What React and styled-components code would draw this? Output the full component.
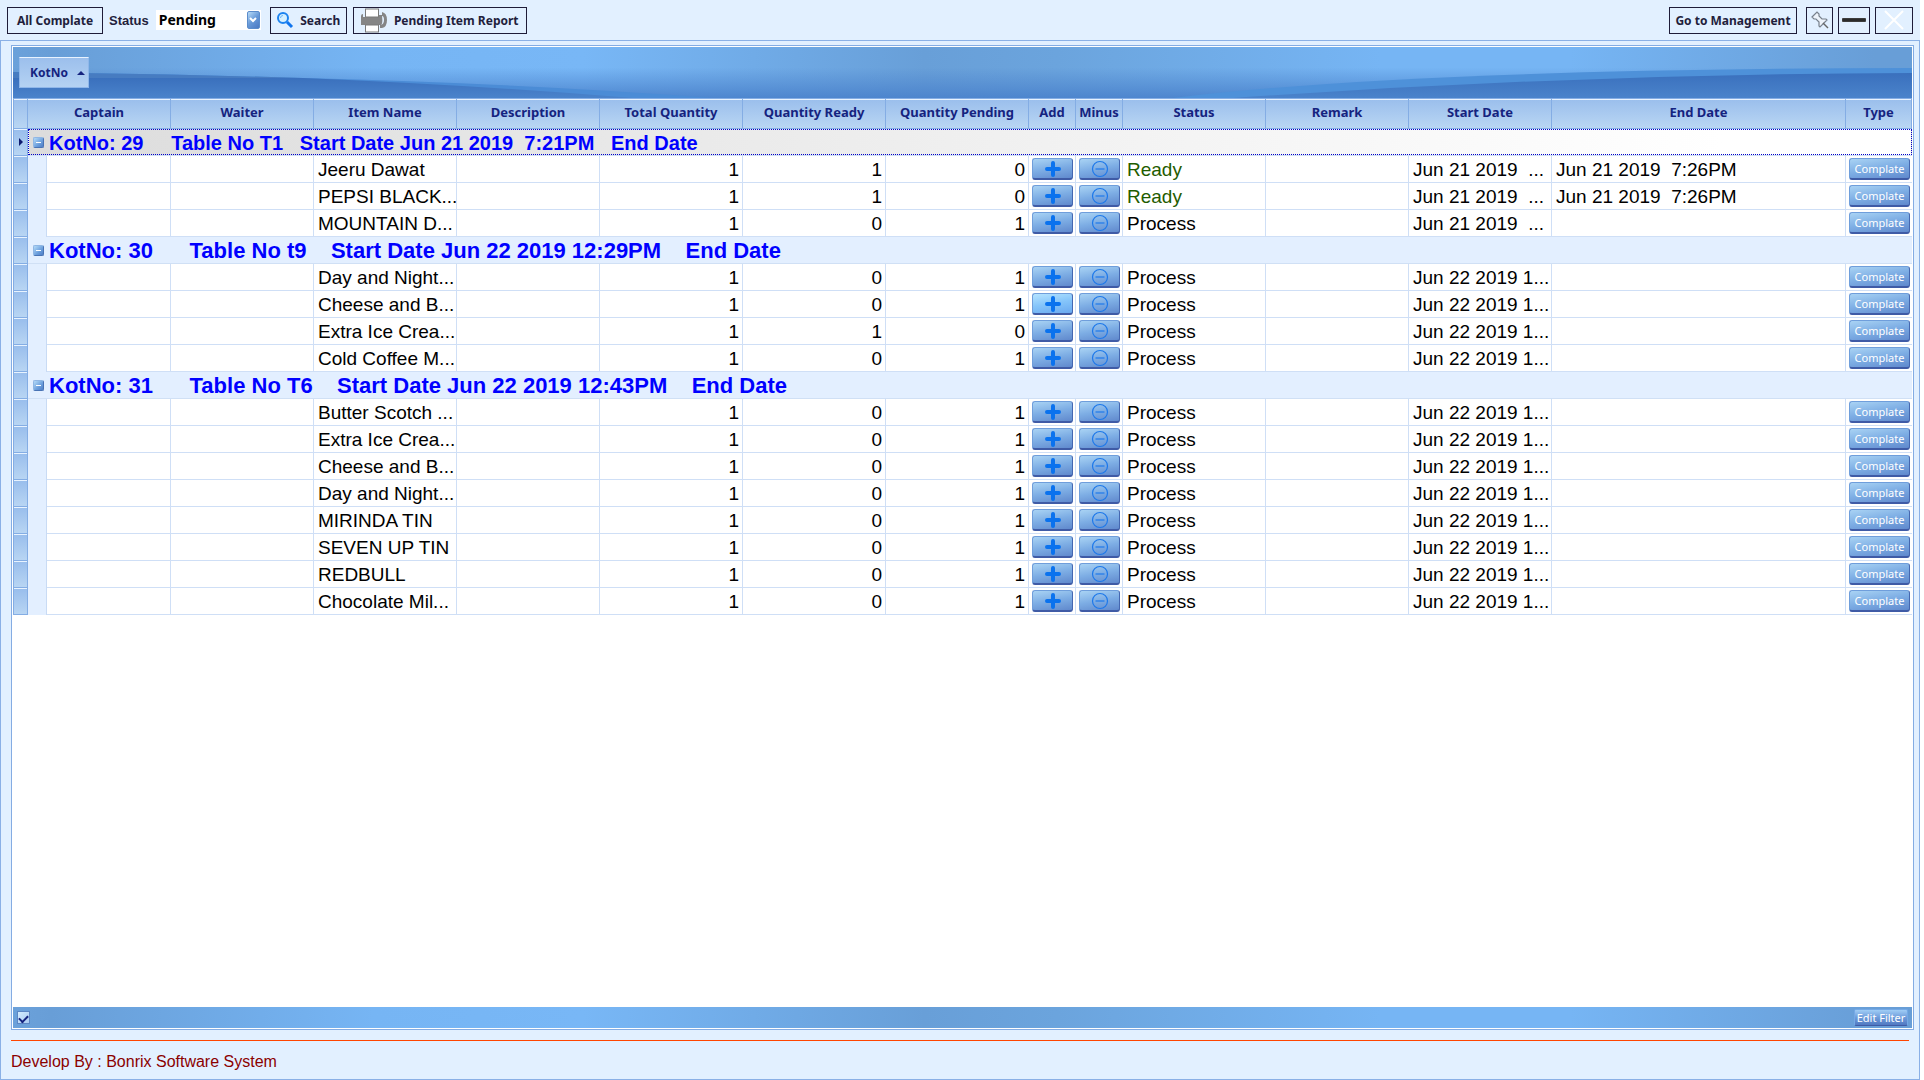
import React from 'react'
import styled, { createGlobalStyle } from 'styled-components'

const columns = [
    { label: 'Captain', key: 'captain' },
    { label: 'Waiter', key: 'waiter' },
    { label: 'Item Name', key: 'item' },
    { label: 'Description', key: 'description' },
    { label: 'Total Quantity', key: 'total', align: 'right' },
    { label: 'Quantity Ready', key: 'ready', align: 'right' },
    { label: 'Quantity Pending', key: 'pending', align: 'right' },
    { label: 'Add', key: 'add' },
    { label: 'Minus', key: 'minus' },
    { label: 'Status', key: 'status' },
    { label: 'Remark', key: 'remark' },
    { label: 'Start Date', key: 'start' },
    { label: 'End Date', key: 'end' },
    { label: 'Type', key: 'type' },
]

const row = (item, ready, pending, status, start, end) => ({ item, total: 1, ready, pending, status, start, end })

const groups = [
    {
        title: 'KotNo: 29     Table No T1   Start Date Jun 21 2019  7:21PM   End Date',
        focused: true,
        rows: [
            row('Jeeru Dawat', 1, 0, 'Ready', 'Jun 21 2019  ...', 'Jun 21 2019  7:26PM'),
            row('PEPSI BLACK...', 1, 0, 'Ready', 'Jun 21 2019  ...', 'Jun 21 2019  7:26PM'),
            row('MOUNTAIN D...', 0, 1, 'Process', 'Jun 21 2019  ...'),
        ],
    },
    {
        title: 'KotNo: 30      Table No t9    Start Date Jun 22 2019 12:29PM    End Date',
        rows: [
            row('Day and Night...', 0, 1, 'Process', 'Jun 22 2019 1...'),
            { ...row('Cheese and B...', 0, 1, 'Process', 'Jun 22 2019 1...'), hot: true },
            row('Extra Ice Crea...', 1, 0, 'Process', 'Jun 22 2019 1...'),
            row('Cold Coffee M...', 0, 1, 'Process', 'Jun 22 2019 1...'),
        ],
    },
    {
        title: 'KotNo: 31      Table No T6    Start Date Jun 22 2019 12:43PM    End Date',
        rows: [
            row('Butter Scotch ...', 0, 1, 'Process', 'Jun 22 2019 1...'),
            row('Extra Ice Crea...', 0, 1, 'Process', 'Jun 22 2019 1...'),
            row('Cheese and B...', 0, 1, 'Process', 'Jun 22 2019 1...'),
            row('Day and Night...', 0, 1, 'Process', 'Jun 22 2019 1...'),
            row('MIRINDA TIN', 0, 1, 'Process', 'Jun 22 2019 1...'),
            row('SEVEN UP TIN', 0, 1, 'Process', 'Jun 22 2019 1...'),
            row('REDBULL', 0, 1, 'Process', 'Jun 22 2019 1...'),
            row('Chocolate Mil...', 0, 1, 'Process', 'Jun 22 2019 1...'),
        ],
    },
]

const SearchIcon = () => (
    <svg width="18" height="18" viewBox="0 0 18 18" aria-hidden="true">
        <circle cx="7" cy="7" r="5" fill="#d5efff" stroke="#1c83f0" strokeWidth="2" />
        <path d="M4.5 7a2.5 2.5 0 0 1 2.5-2.5" fill="none" stroke="#6ab5f7" />
        <path d="M11 11l5 5" stroke="#0f74ee" strokeWidth="3" />
    </svg>
)

const PrinterIcon = () => (
    <svg width="27" height="25" viewBox="0 0 27 25" aria-hidden="true">
        <path d="M0 8q0-2 2-2v3h16V7h3V4q5 1 5 8t-5 8h-2v-3h1q3-1 3-5t-2-4q1 8-1 9H0z" fill="#858585" />
        <rect x="4.500" y="1" width="13" height="8" fill="#fff" stroke="#7a7a7a" />
        <rect x="4.500" y="17" width="13" height="7" fill="#fff" stroke="#7a7a7a" />
    </svg>
)

const PinIcon = () => (
    <svg width="18" height="18" viewBox="0 0 18 18" aria-hidden="true">
        <path d="M1 6l5-5 2 2v2l3 3h4l1 1-7 7-1-1v-4L5 8H3z" fill="#edf3fa" stroke="#77808c" strokeWidth="1.2" />
        <path d="M12 12l5 5" stroke="#666" strokeWidth="1.4" />
    </svg>
)

const MinimizeIcon = () => (
    <svg width="24" height="4" viewBox="0 0 24 4" aria-hidden="true">
        <rect width="24" height="4" rx="1" fill="#2b2b2b" stroke="#777" strokeWidth=".5" />
    </svg>
)

const CloseIcon = () => (
    <svg width="20" height="20" viewBox="0 0 20 20" aria-hidden="true">
        <path d="M1 1l18 18M19 1L1 19" stroke="#fff" strokeWidth="2" />
    </svg>
)

const PlusIcon = () => (
    <svg width="16" height="16" viewBox="0 0 16 16" aria-hidden="true">
        <path d="M8 2v12M2 8h12" stroke="#0a72ee" strokeWidth="4" strokeLinecap="round" />
    </svg>
)

const CircleMinusIcon = () => (
    <svg width="18" height="18" viewBox="0 0 18 18" aria-hidden="true">
        <circle cx="9" cy="9" r="7.5" fill="none" stroke="#1d78ea" strokeWidth="1.2" />
        <path d="M4.500 9h9" stroke="#2b80ea" strokeWidth="1.4" />
    </svg>
)

const BandWaves = () => (
    <svg width="100%" height="51" viewBox="0 0 1899 51" preserveAspectRatio="none" aria-hidden="true">
        <defs>
            <linearGradient id="shade" x1="0" y1="0" x2="0" y2="1">
                <stop offset="0" stopColor="#4a82cc" stopOpacity="0" />
                <stop offset=".4" stopColor="#4a82cc" stopOpacity="0" />
                <stop offset="1" stopColor="#4a82cc" stopOpacity=".9" />
            </linearGradient>
            <linearGradient id="deep" x1="0" y1="0" x2="0" y2="1">
                <stop offset="0" stopColor="#3a70bd" />
                <stop offset="1" stopColor="#4a83cb" />
            </linearGradient>
        </defs>
        <rect width="1899" height="51" fill="url(#shade)" />
        <path d="M0 25Q160 27 290 31Q520 37 700 51H0z" fill="#4b8cd6" />
        <path d="M0 25Q160 27 290 31L0 36z" fill="#477cc1" />
        <path d="M0 31H290Q460 38 620 51H0z" fill="url(#deep)" />
        <path d="M1160 51Q1400 22 1899 21V51z" fill="#4e91d9" />
        <path d="M1220 51Q1560 27 1899 26V51z" fill="url(#deep)" />
    </svg>
)

const App = () => {
    return <Window>
        <GlobalStyle />
        <Toolbar>
            <ToolButton>All Complate</ToolButton>
            <StatusField>
                <StatusLabel htmlFor="status">Status</StatusLabel>
                <SelectBox>
                    <StatusSelect id="status" defaultValue="Pending">
                        <option>Pending</option>
                        <option>Ready</option>
                    </StatusSelect>
                    <SelectArrow>
                        <svg width="8" height="6" viewBox="0 0 8 6" aria-hidden="true">
                            <path d="M1 1l3 3 3-3" fill="none" stroke="#fff" strokeWidth="2" />
                        </svg>
                    </SelectArrow>
                </SelectBox>
            </StatusField>
            <ToolButton $width={77}><SearchIcon />Search</ToolButton>
            <ToolButton $width={174}><PrinterIcon />Pending Item Report</ToolButton>
            <WindowButtons>
                <ToolButton $width={128}>Go to Management</ToolButton>
                <WindowControls>
                    <ToolButton $width={27} aria-label="Pin"><PinIcon /></ToolButton>
                    <ToolButton $width={32} aria-label="Minimize"><MinimizeIcon /></ToolButton>
                    <ToolButton $width={38} aria-label="Close"><CloseIcon /></ToolButton>
                </WindowControls>
            </WindowButtons>
        </Toolbar>
        <Panel>
            <Grid>
                <GroupBand>
                    <BandWaves />
                    <GroupChip>KotNo<SortArrow /></GroupChip>
                </GroupBand>
                <TableArea>
                    <KotTable>
                        <colgroup>
                            <col style={{ width: 15 }} />
                            <col style={{ width: 19 }} />
                            <col style={{ width: 124 }} />
                            {[143, 143, 143, 143, 143, 143, 47, 47, 143, 143, 143].map((width, i) => (
                                <col key={i} style={{ width }} />
                            ))}
                            <col />
                            <col style={{ width: 66 }} />
                        </colgroup>
                        <thead>
                            <tr>
                                <HeadCell $first />
                                {columns.map((column, i) => (
                                    <HeadCell key={column.key} colSpan={i === 0 ? 2 : 1}>{column.label}</HeadCell>
                                ))}
                            </tr>
                        </thead>
                        <tbody>
                            {groups.map((group) => (
                                <React.Fragment key={group.title}>
                                    <tr>
                                        <MarkerCell>{group.focused && <RowArrow />}</MarkerCell>
                                        <GroupCell colSpan={15}>
                                            <GroupTitle $focused={group.focused}>
                                                <Toggle aria-label="Collapse group" />
                                                <GroupText>{group.title}</GroupText>
                                            </GroupTitle>
                                        </GroupCell>
                                    </tr>
                                    {group.rows.map((item, i) => (
                                        <tr key={i}>
                                            <MarkerCell />
                                            <IndentCell />
                                            {columns.map((column) => <GridCell key={column.key} column={column} item={item} />)}
                                        </tr>
                                    ))}
                                </React.Fragment>
                            ))}
                        </tbody>
                    </KotTable>
                </TableArea>
                <FilterBar>
                    <FilterCheck type="checkbox" defaultChecked aria-label="Filter enabled" />
                    <EditFilter>Edit Filter</EditFilter>
                </FilterBar>
            </Grid>
            <Footer>Develop By : Bonrix Software System</Footer>
        </Panel>
    </Window>
}

const GridCell = ({ column, item }) => {
    if (column.key === 'add') {
        return <ButtonCell><GlossButton $hot={item.hot} aria-label="Add"><PlusIcon /></GlossButton></ButtonCell>
    }
    if (column.key === 'minus') {
        return <ButtonCell><GlossButton aria-label="Minus"><CircleMinusIcon /></GlossButton></ButtonCell>
    }
    if (column.key === 'type') {
        return <ButtonCell $last><GlossButton>Complate</GlossButton></ButtonCell>
    }
    const ready = column.key === 'status' && item.status === 'Ready'
    return <Cell $align={column.align} $ready={ready}>{item[column.key]}</Cell>
}

const GlobalStyle = createGlobalStyle`
* {
    box-sizing: border-box;
}
body {
    margin: 0;
    background: #fff;
    font-family: "Liberation Sans", Arial, sans-serif;
}
button {
    font-family: "Noto Sans", Tahoma, sans-serif;
}
`

const Window = styled.div`
    display: flex;
    flex-direction: column;
    min-height: 100vh;
    margin-right: 4px;
    background: #e2f0ff;
`

const Toolbar = styled.header`
    display: flex;
    align-items: center;
    gap: 6px;
    height: 40px;
    padding: 0 7px;
`

const ToolButton = styled.button`
    display: flex;
    align-items: center;
    justify-content: center;
    gap: 6px;
    width: ${({ $width }) => $width || 96}px;
    height: 27px;
    padding: 0;
    border: 1px solid #1f1c38;
    background: transparent;
    color: #221e3c;
    font-size: 12px;
    font-weight: 700;
    white-space: nowrap;
`

const StatusField = styled.div`
    display: flex;
    align-items: center;
    gap: 7px;
    margin-right: 3px;
`

const StatusLabel = styled.label`
    color: #221e3c;
    font-size: 13px;
    font-weight: 700;
`

const SelectBox = styled.div`
    display: flex;
    align-items: center;
    width: 105px;
    height: 20px;
    padding-right: 1px;
    background: #fff;
`

const StatusSelect = styled.select`
    flex: 1;
    min-width: 0;
    height: 20px;
    padding: 0 0 0 3px;
    border: 0;
    background: transparent;
    color: #000;
    appearance: none;
    font-family: "Noto Sans", Tahoma, sans-serif;
    font-size: 14px;
    font-weight: 700;
    line-height: 20px;
`

const SelectArrow = styled.span`
    display: flex;
    align-items: center;
    justify-content: center;
    width: 13px;
    height: 18px;
    border: 1px solid #5b8ccb;
    border-radius: 2px;
    background: linear-gradient(135deg, #b8dbf7, #6799d8 50%, #4a78c2);
`

const WindowButtons = styled.div`
    display: flex;
    gap: 9px;
    margin-left: auto;
`

const WindowControls = styled.div`
    display: flex;
    gap: 5px;
`

const Panel = styled.main`
    display: flex;
    flex: 1;
    flex-direction: column;
    padding: 4px 5px 0 10px;
    border: 1px solid #8ab0e6;
`

const Grid = styled.section`
    display: flex;
    flex: 1;
    flex-direction: column;
    padding: 1px;
    border: 1px solid #84ace3;
    background: #fff;
`

const GroupBand = styled.div`
    position: relative;
    height: 51px;
    background: linear-gradient(90deg, #6ba1da, #689ed7 2%, #76b5f4 19%, #78b7f6 30%, #689fd8 48%, #6ba4dd 55%, #76b5f4 72%, #76b5f4 82%, #689ed7 98%);
    svg {
        display: block;
    }
`

const GroupChip = styled.button`
    position: absolute;
    top: 10px;
    left: 6px;
    display: flex;
    align-items: center;
    justify-content: space-between;
    width: 70px;
    height: 31px;
    padding: 0 3px 0 10px;
    border: 1px solid #8fb7ea;
    border-top: 1px solid #e8f3ff;
    background: linear-gradient(#9cbfec, #b4d2f3);
    color: #15237f;
    font-size: 12px;
    font-weight: 700;
`

const SortArrow = styled.span`
    border: 4px solid transparent;
    border-top-width: 0;
    border-bottom-color: #15237f;
`

const TableArea = styled.div`
    flex: 1;
`

const KotTable = styled.table`
    width: 100%;
    table-layout: fixed;
    border-collapse: separate;
    border-spacing: 0;
`

const HeadCell = styled.th`
    height: 31px;
    padding: 0 0 3px;
    border: solid #84ade4;
    border-width: 1px 1px 1px ${({ $first }) => $first ? 1 : 0}px;
    background: linear-gradient(#9abeec, #b9d6f3);
    box-shadow: inset 0 1px #e8f3ff;
    color: #15237f;
    font-family: "Noto Sans", Tahoma, sans-serif;
    font-size: 13px;
    font-weight: 700;
    line-height: 24px;
    white-space: nowrap;
`

const MarkerCell = styled.td`
    height: 27px;
    padding: 0 0 0 5px;
    border: solid #84ade4;
    border-width: 0 1px 1px 1px;
    background: linear-gradient(#98bdec, #b8d5f3);
    box-shadow: inset 0 1px #e8f3ff;
`

const RowArrow = styled.span`
    display: block;
    width: 4px;
    border: 4px solid transparent;
    border-right-width: 0;
    border-left-color: #0f1c70;
`

const GroupCell = styled.td`
    height: 27px;
    padding: 0;
    border-bottom: 1px solid #d0e0f5;
    background: #e3efff;
`

const GroupTitle = styled.div`
    display: flex;
    align-items: center;
    gap: 5px;
    height: 26px;
    padding-left: 4px;
    border: 1px ${({ $focused }) => $focused ? 'dotted #0000c8' : 'solid transparent'};
    background: ${({ $focused }) => $focused ? 'linear-gradient(90deg, #dcdcdc, #fff 90%)' : 'none'};
    color: #0000ff;
    font-size: ${({ $focused }) => $focused ? 20 : 22}px;
    font-weight: 700;
    line-height: 22px;
    white-space: pre;
`

const GroupText = styled.span`
    padding-top: 2px;
`

const Toggle = styled.button`
    display: flex;
    align-items: center;
    justify-content: center;
    width: 11px;
    height: 11px;
    padding: 0;
    border: 1px solid #4873b5;
    border-top-color: #8fb6e4;
    border-left-color: #8fb6e4;
    border-radius: 2px;
    background: linear-gradient(135deg, #b4dbf8, #6b9edc 60%, #4f7ec6);
    &::before {
        content: '';
        width: 5px;
        height: 1px;
        background: #fff;
    }
`

const IndentCell = styled.td`
    padding: 0;
    border-right: 1px solid #c9dbf4;
    background: #e3efff;
`

const Cell = styled.td`
    height: 27px;
    padding: 2px 3px 0 4px;
    overflow: hidden;
    border: solid #cfdff6;
    border-width: 0 1px 1px 0;
    color: ${({ $ready }) => $ready ? '#1f5c00' : '#000'};
    font-size: 19px;
    line-height: 24px;
    text-align: ${({ $align }) => $align || 'left'};
    white-space: pre;
`

const ButtonCell = styled.td`
    height: 27px;
    padding: 2px 2px 2px 3px;
    border: solid #cfdff6;
    border-width: 0 ${({ $last }) => $last ? 0 : 1}px 1px 0;
`

const GlossButton = styled.button`
    display: flex;
    align-items: center;
    justify-content: center;
    width: 100%;
    height: 22px;
    padding: 0;
    border: 1px solid #6f9edb;
    border-right-color: #4567b0;
    border-bottom: 2px solid #3f5ba6;
    border-radius: 3px;
    background: ${({ $hot }) => $hot
        ? 'linear-gradient(170deg, #b5e4ff, #84c4fa 50%, #6aa9f0)'
        : 'linear-gradient(170deg, #a9d3f4, #7dade4 50%, #6089cd)'};
    color: #fff;
    font-size: 11px;
`

const FilterBar = styled.div`
    display: flex;
    align-items: center;
    justify-content: space-between;
    height: 21px;
    padding: 0 4px;
    background: linear-gradient(90deg, #6ba1da, #689ed7 2%, #76b5f4 19%, #78b7f6 30%, #689fd8 48%, #6ba4dd 55%, #76b5f4 72%, #76b5f4 82%, #689ed7 98%);
`

const FilterCheck = styled.input`
    display: grid;
    place-items: center;
    width: 13px;
    height: 13px;
    margin: 0;
    appearance: none;
    border: 1px solid #5c86c4;
    background: linear-gradient(135deg, #d3ecff, #a9caf2);
    &:checked::before {
        content: '';
        width: 7px;
        height: 4px;
        border: solid #15237f;
        border-width: 0 0 2px 2px;
        transform: rotate(-45deg);
    }
`

const EditFilter = styled.button`
    width: 54px;
    height: 17px;
    padding: 0;
    border: 1px solid #74a9e6;
    border-bottom-color: #3f5ba6;
    border-radius: 2px;
    background: linear-gradient(#a0cdf5, #6f9cdb 50%, #5079c2);
    color: #fff;
    font-size: 11px;
    line-height: 14px;
    white-space: nowrap;
`

const Footer = styled.footer`
    height: 39px;
    margin: 10px 5px 0 0;
    border-top: 1px solid #ff4500;
    color: #8b0000;
    font-size: 16px;
    line-height: 42px;
`

export default App
